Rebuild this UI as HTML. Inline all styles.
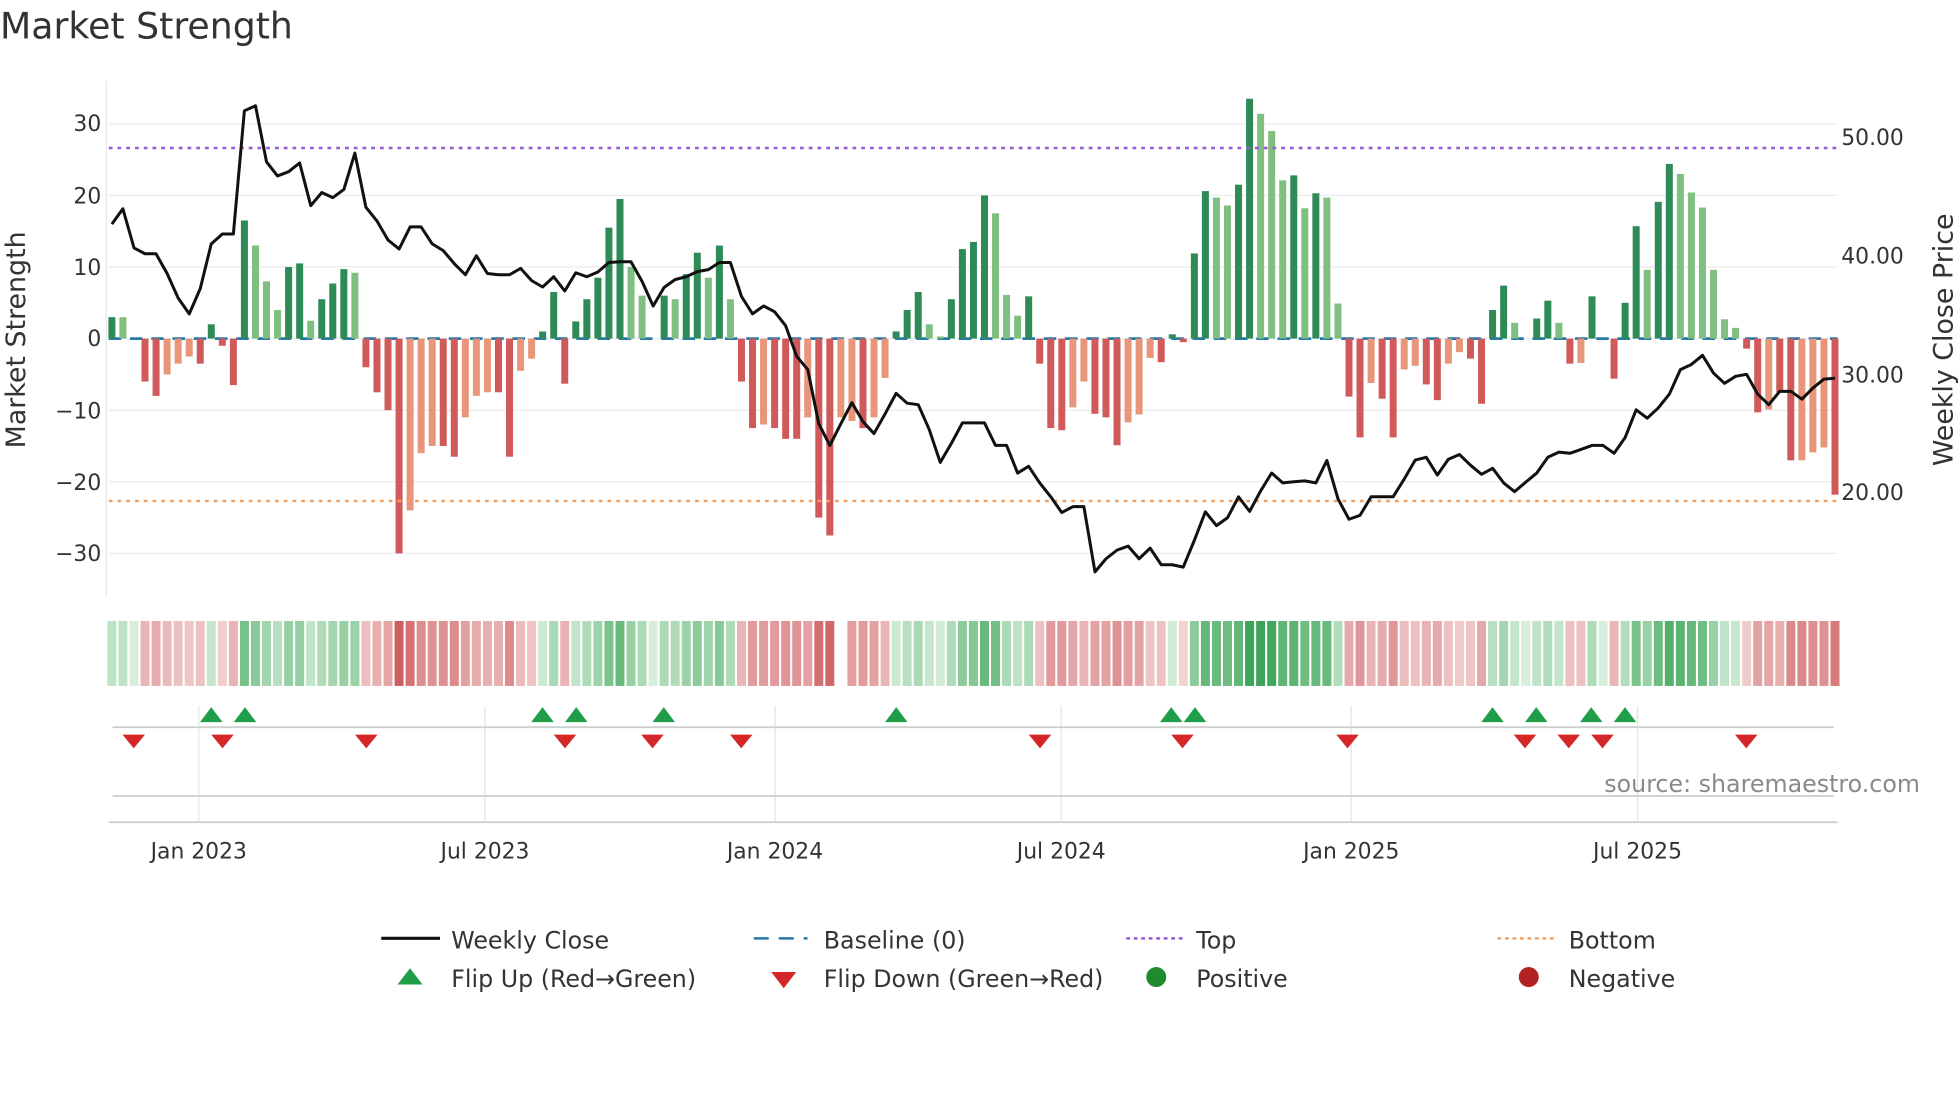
<!DOCTYPE html>
<html><head><meta charset="utf-8">
<style>
html,body{margin:0;padding:0;background:#fff;width:1960px;height:1102px;overflow:hidden}
svg{display:block}
text{font-family:"DejaVu Sans","Liberation Sans",sans-serif;fill:#333}
</style></head>
<body>
<svg id="s" width="1960" height="1102" viewBox="0 0 1568 882" preserveAspectRatio="none" xmlns="http://www.w3.org/2000/svg">
<text x="0" y="31" font-size="29" fill="#333">Market Strength</text>
<g id="grid"></g>
<line x1="85" y1="65" x2="85" y2="478" stroke="#e6e6e6" stroke-width="1"/>
<g font-size="17.5" text-anchor="end">
<text x="81" y="105">30</text><text x="81" y="163">20</text><text x="81" y="220">10</text><text x="81" y="277">0</text>
<text x="81" y="335">−10</text><text x="81" y="392">−20</text><text x="81" y="449">−30</text>
</g>
<g font-size="17.5">
<text x="1473" y="116">50.00</text><text x="1473" y="211">40.00</text><text x="1473" y="306">30.00</text><text x="1473" y="400">20.00</text>
</g>
<text transform="translate(20,272) rotate(-90)" font-size="21.5" text-anchor="middle">Market Strength</text>
<text transform="translate(1562,272) rotate(-90)" font-size="21.5" text-anchor="middle">Weekly Close Price</text>
<line x1="87" y1="271" x2="1470" y2="271" stroke="#2a78a8" stroke-width="2.2" stroke-dasharray="10,7"/>
<g id="bars"></g>
<line x1="87" y1="118.5" x2="1470" y2="118.5" stroke="#9b59d6" stroke-width="2" stroke-dasharray="3,4"/>
<line x1="87" y1="401" x2="1470" y2="401" stroke="#f0a060" stroke-width="2" stroke-dasharray="3,4"/>
<polyline id="price" fill="none" stroke="#111" stroke-width="2.4" stroke-linejoin="round"/>
<g id="heat"></g>
<g id="vg" stroke="#e4e4e4" stroke-width="1"></g>
<line x1="90" y1="582" x2="1467" y2="582" stroke="#cfcfcf" stroke-width="1.5"/>
<line x1="90" y1="637" x2="1467" y2="637" stroke="#cfcfcf" stroke-width="1.5"/>
<line x1="87" y1="658" x2="1470" y2="658" stroke="#cfcfcf" stroke-width="1.5"/>
<g id="flips"></g>
<text x="1536" y="634" font-size="19" text-anchor="end" style="fill:#8a8a8a">source: sharemaestro.com</text>
<g font-size="17.5" text-anchor="middle">
<text x="159" y="687">Jan 2023</text><text x="388" y="687">Jul 2023</text><text x="620" y="687">Jan 2024</text>
<text x="849" y="687">Jul 2024</text><text x="1081" y="687">Jan 2025</text><text x="1310" y="687">Jul 2025</text>
</g>
<g font-size="19">
<line x1="305" y1="751" x2="352" y2="751" stroke="#111" stroke-width="2.5"/><text x="361" y="759">Weekly Close</text>
<line x1="603" y1="751" x2="646" y2="751" stroke="#2a78a8" stroke-width="2" stroke-dasharray="12,8"/><text x="659" y="759">Baseline (0)</text>
<line x1="901" y1="751" x2="946" y2="751" stroke="#9b59d6" stroke-width="2" stroke-dasharray="3,3"/><text x="957" y="759">Top</text>
<line x1="1198" y1="751" x2="1243" y2="751" stroke="#f0a060" stroke-width="2" stroke-dasharray="3,3"/><text x="1255" y="759">Bottom</text>
<polygon points="318,788 338,788 328,775" fill="#1f9e4a"/><text x="361" y="790">Flip Up (Red→Green)</text>
<polygon points="617,778 637,778 627,791" fill="#d62728"/><text x="659" y="790">Flip Down (Green→Red)</text>
<circle cx="925" cy="782" r="8" fill="#1f8a2e"/><text x="957" y="790">Positive</text>
<circle cx="1223" cy="782" r="8" fill="#b22222"/><text x="1255" y="790">Negative</text>
</g>
</svg>
<script>
(function(){
var NS="http://www.w3.org/2000/svg";
function el(p,t,a){var e=document.createElementNS(NS,t);for(var k in a)e.setAttribute(k,a[k]);p.appendChild(e);return e;}
var grid=document.getElementById('grid');
[30,20,10,0,-10,-20,-30].forEach(function(v){var y=271-v*5.73;el(grid,'line',{x1:87,x2:1470,y1:y,y2:y,stroke:'#ececec','stroke-width':1});});
var d="G3 L3 0 R-6 R-8 O-5 O-3.5 O-2.5 R-3.5 G2 R-1 R-6.5 G16.5 L13 L8 L4 G10 G10.5 L2.5 G5.5 G7.7 G9.7 L9.2 R-4 R-7.5 R-10 R-30 O-24 O-16 O-15 R-15 R-16.5 O-11 O-8 O-7.5 R-7.5 R-16.5 O-4.5 O-2.8 G1 G6.5 R-6.3 G2.4 G5.5 G8.5 G15.5 G19.5 L10 L6 0 G6 L5.5 G9 G12 L8.5 G13 L5.5 R-6 R-12.5 O-12 R-12.5 R-14 R-14 O-11 R-25 R-27.5 O-11 O-11.5 R-12.5 O-11 O-5.5 G1 G4 G6.5 L2 L0.3 G5.5 G12.5 G13.5 G20 L17.5 L6.1 L3.2 G5.9 R-3.5 R-12.5 R-12.8 O-9.6 O-6 R-10.5 R-11 R-14.9 O-11.7 O-10.6 O-2.7 R-3.3 G0.6 R-0.5 G11.9 G20.6 L19.7 L18.6 G21.5 G33.5 L31.4 L29 L22.1 G22.8 L18.2 G20.3 L19.7 L4.9 R-8.1 R-13.8 O-6.2 R-8.4 R-13.8 O-4.3 O-3.8 R-6.4 R-8.6 O-3.5 O-1.9 R-2.8 R-9.1 G4 G7.4 L2.2 0 G2.8 G5.3 L2.2 R-3.5 O-3.4 G5.9 0 R-5.6 G5 G15.7 L9.6 G19.1 G24.4 L23 L20.4 L18.3 L9.6 L2.7 L1.5 R-1.4 R-10.3 O-9.9 R-7.5 R-17 O-17 O-15.9 O-15.2 R-21.8".split(' ');
var col={G:'#2e8b57',L:'#7fbf7f',R:'#d05a5a',O:'#e8967a'};
var bars=document.getElementById('bars'),heat=document.getElementById('heat');
var N=d.length,sp=(1468-89.5)/(N-1);
function X(i){return 89.5+sp*i;}
function mix(a,b,t){var r=[];for(var k=0;k<3;k++)r.push(Math.round(a[k]+(b[k]-a[k])*t));return 'rgb('+r.join(',')+')';}
d.forEach(function(s,i){
  var c=s[0],v=parseFloat(s.replace(/^[GLRO]/,''));if(isNaN(v))v=0;
  var x=X(i);
  if(c in col&&v!==0){var h=Math.abs(v)*5.73;el(bars,'rect',{x:x-2.8,width:5.6,y:v>0?271-h:271,height:h,fill:col[c]});}
  if(i===66)return;
  var t=Math.min(1,Math.abs(v)/30),fill;
  if(v>=0)fill=mix([214,238,219],[62,165,88],Math.pow(t,0.8));else fill=mix([244,214,214],[205,95,97],Math.pow(t,0.8));
  el(heat,'rect',{x:x-3.6,width:7.2,y:497,height:52,fill:fill});
});
var p1=[365,326,425,440,440,490,552,592,528,415,390,390,78,65,207,243,232,210,318,285,298,277,185,322,357,405,428,372,372,415,432,465,493,445,490,493,493,477,508,524,498,534,488,498,486,462,460,460,510,572,525,505,498,485,480,462,462,548,592,572,587,622,700,733,870,925,870,817,865,895,845,793,818,822,885,968,920,868,868,868];
var p2=[925,925,995,978,1020,1055,1095,1080,1080,1245,1212,1190,1180,1212,1185,1227,1227,1233,1165,1093,1128,1108,1055,1092,1040,995,1020,1017,1015,1020,963,1060,1112,1102,1055,1055,1055,1010,962,955,1000,960,948,975,998,983,1020,1042,1018,995,955,942,945,935,925,925,945,905,835,856,830,795,733,720,697,742,768,750,745,795,822,788,788,808,780,757,755];
var P=p1.concat(p2),pts=[];
for(var i=0;i<P.length&&i<N;i++){pts.push(X(i).toFixed(1)+','+(P[i]/3.1625+64).toFixed(1));}
document.getElementById('price').setAttribute('points',pts.join(' '));
var vg=document.getElementById('vg');
[159,388,620,849,1081,1310].forEach(function(x){el(vg,'line',{x1:x,x2:x,y1:565,y2:658});});
var f=document.getElementById('flips');
[169,196,434,461,531,717,937,956,1194,1229,1273,1300].forEach(function(x){el(f,'polygon',{points:(x-9)+',578 '+(x+9)+',578 '+x+',566',fill:'#1f9e4a'});});
[107,178,293,452,522,593,832,946,1078,1220,1255,1282,1397].forEach(function(x){el(f,'polygon',{points:(x-9)+',588 '+(x+9)+',588 '+x+',599',fill:'#d62728'});});
})();
</script>
</body></html>
